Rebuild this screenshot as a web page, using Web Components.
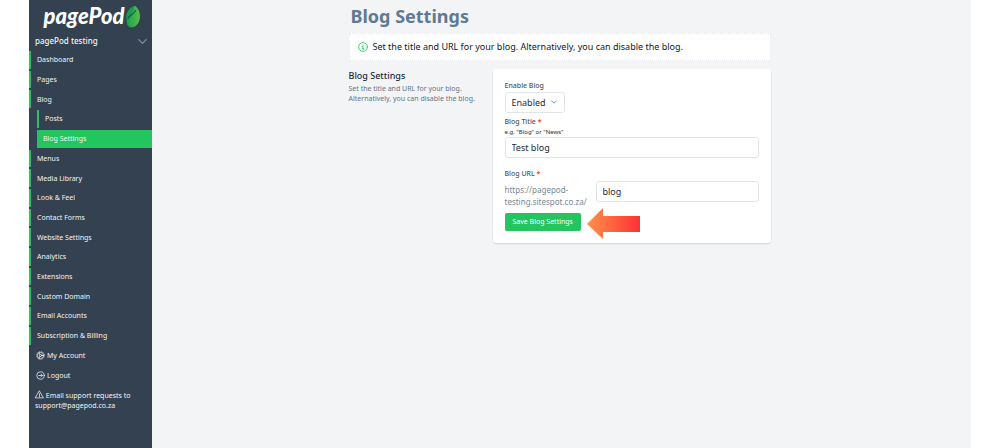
<!DOCTYPE html>
<html lang="en">
<head>
<meta charset="utf-8">
<title>Blog Settings</title>
<style>
body {
    margin: 0;
    background: #fff;
    color: #1f2937;
    font-family: "Noto Sans", sans-serif;
    font-size: 7px;
    line-height: 10px;
}
</style>
</head>
<body>

<app-shell>
    <side-bar slot="sidebar" account="pagePod testing">
        <nav-item>Dashboard</nav-item>
        <nav-item>Pages</nav-item>
        <nav-item>Blog</nav-item>
        <nav-item sub>Posts</nav-item>
        <nav-item sub active>Blog Settings</nav-item>
        <nav-item>Menus</nav-item>
        <nav-item>Media Library</nav-item>
        <nav-item>Look &amp; Feel</nav-item>
        <nav-item>Contact Forms</nav-item>
        <nav-item>Website Settings</nav-item>
        <nav-item>Analytics</nav-item>
        <nav-item>Extensions</nav-item>
        <nav-item>Custom Domain</nav-item>
        <nav-item>Email Accounts</nav-item>
        <nav-item>Subscription &amp; Billing</nav-item>
        <nav-item plain><line-icon name="cog"></line-icon> My Account</nav-item>
        <nav-item plain><line-icon name="logout"></line-icon> Logout</nav-item>
        <span slot="support"><line-icon name="warning"></line-icon> Email support requests to support@pagepod.co.za</span>
    </side-bar>
    <page-title>Blog Settings</page-title>
    <info-banner>Set the title and URL for your blog. Alternatively, you can disable the blog.</info-banner>
    <settings-section heading="Blog Settings">
        <span slot="description">Set the title and URL for your blog. Alternatively, you can disable the blog.</span>
        <blog-form></blog-form>
    </settings-section>
</app-shell>

<script>
class BaseElement extends HTMLElement {

    constructor() {
        super();
        const template = document.createElement('template');
        template.innerHTML = this.constructor.html;
        this.attachShadow({ mode: 'open' });
        this.shadowRoot.append(template.content.cloneNode(true));
    }

}

class LineIcon extends BaseElement {

    static icons = {
        cog: '<circle cx="12" cy="12" r="8.500"/><circle cx="12" cy="12" r="10.500" stroke-dasharray="2.500 3" stroke-linecap="butt"/><circle cx="12" cy="12" r="3"/><path d="M15 12h5M10.500 9.400 8 5M10.500 14.600 8 19"/>',
        logout: '<circle cx="12" cy="12" r="10"/><path d="M7 12h10M13 8l4 4-4 4"/>',
        warning: '<path d="M12 3 22.500 21h-21z"/><path d="M12 10v5M12 17v1"/>',
        info: '<circle cx="12" cy="12" r="10.500"/><path d="M10 11h2v6M10 17h4M12 7v1"/>',
        chevron: '<path stroke-width="3" d="M2 7l10 10L22 7"/>'
    };

    static html = `
        <style>
        :host { display: inline-block; width: 9px; height: 9px; vertical-align: -1px; }
        svg {
            display: block;
            width: 100%;
            height: 100%;
            fill: none;
            stroke: currentColor;
            stroke-width: 2;
            stroke-linejoin: round;
            stroke-linecap: round;
            overflow: visible;
        }
        </style>
        <svg viewBox="0 0 24 24" aria-hidden="true"></svg>
    `;

    connectedCallback() {
        this.shadowRoot.querySelector('svg').innerHTML = LineIcon.icons[this.getAttribute('name')];
    }

}

class PodLogo extends BaseElement {

    static html = `
        <style>
        :host { display: block; }
        a {
            display: flex;
            justify-content: center;
            align-items: center;
            gap: 1px;
            padding-left: 2px;
            color: #fff;
            font: italic 900 22px/32px Lato, "Noto Sans", sans-serif;
            text-decoration: none;
        }
        svg { width: 14px; height: 23px; }
        </style>
        <a href="#"><span>pagePod</span><svg viewBox="0 0 42 69" aria-hidden="true">
            <linearGradient id="leaf"><stop stop-color="#159a52"/><stop offset="1" stop-color="#5cc04a"/></linearGradient>
            <path fill="url(#leaf)" d="M27 2c12 9 17 24 14 40-3 15-12 25-25 25C5 67 1 57 2 44 3 26 14 12 27 2z"/>
            <path fill="#1b9a50" d="M25 2C11 8 1 20 1 35c0 4 0 7 2 9 7-15 21-22 22-42z"/>
            <path fill="none" stroke="#12663a" stroke-width="4" d="M29 15C27 28 10 28 6 41"/>
            <path fill="none" stroke="#4db84b" stroke-width="2" d="M31 17c1 18-16 26-19 43"/>
        </svg></a>
    `;

}

class NavItem extends BaseElement {

    static html = `
        <style>
        :host { display: flex; flex: 1; padding-bottom: 2px; }
        a {
            display: flex;
            flex: 1;
            align-items: center;
            gap: 2px;
            padding: 1px 0 0 6px;
            border-left: 2px solid #22c55e;
            color: #f3f4f6;
            text-decoration: none;
        }
        :host([sub]) { padding-left: 8px; }
        :host([active]) a { padding-left: 4px; background: #22c55e; }
        :host([plain]) a { padding-left: 5px; border-color: transparent; }
        </style>
        <a href="#"><slot></slot></a>
    `;

}

class SideBar extends BaseElement {

    static html = `
        <style>
        :host {
            display: flex;
            flex-direction: column;
            box-sizing: border-box;
            min-height: 100vh;
            padding-bottom: 37px;
            background: #334150;
            color: #f3f4f6;
        }
        button {
            display: flex;
            justify-content: space-between;
            align-items: center;
            padding: 0 5px 0 6px;
            border: 0;
            background: none;
            color: inherit;
            font: 500 8px/18px "Noto Sans", sans-serif;
        }
        button line-icon { color: #8093ab; }
        nav { display: flex; flex: 1; flex-direction: column; padding-top: 1px; }
        p { margin: 0; padding: 4px 16px 0 6px; }
        </style>
        <pod-logo></pod-logo>
        <button type="button"><span></span><line-icon name="chevron"></line-icon></button>
        <nav><slot></slot></nav>
        <p><slot name="support"></slot></p>
    `;

    connectedCallback() {
        this.shadowRoot.querySelector('button span').textContent = this.getAttribute('account');
    }

}

class AppShell extends BaseElement {

    static html = `
        <style>
        :host {
            display: grid;
            grid-template-columns: 123px 1fr;
            min-height: 100vh;
            margin: 0 29px;
            background: #f3f4f6;
        }
        .content { padding-right: 4px; }
        main { max-width: 422px; margin: 0 auto; padding-top: 4px; }
        </style>
        <slot name="sidebar"></slot>
        <div class="content">
            <main><slot></slot></main>
        </div>
    `;

}

class PageTitle extends BaseElement {

    static html = `
        <style>
        :host { display: block; }
        h1 { margin: 0; padding-left: 2px; color: #5f7a93; font-size: 18px; line-height: 24px; font-weight: 700; }
        </style>
        <h1><slot></slot></h1>
    `;

}

class InfoBanner extends BaseElement {

    static html = `
        <style>
        :host {
            display: flex;
            align-items: center;
            gap: 5px;
            margin: 5px 0 8px;
            padding: 5px 8px;
            border: 1px dotted #e5e7eb;
            background: #fff;
            color: #111827;
            font-size: 9px;
            line-height: 16px;
        }
        line-icon { width: 10px; height: 10px; color: #22c55e; }
        </style>
        <line-icon name="info"></line-icon>
        <span><slot></slot></span>
    `;

}

class SettingsSection extends BaseElement {

    static html = `
        <style>
        :host { display: grid; grid-template-columns: 132px 1fr; gap: 12px; }
        h2 { margin: 0; font-size: 9px; line-height: 14px; font-weight: 500; }
        p { margin: 1px 0 0; color: #64748b; }
        </style>
        <div>
            <h2></h2>
            <p><slot name="description"></slot></p>
        </div>
        <slot></slot>
    `;

    connectedCallback() {
        this.shadowRoot.querySelector('h2').textContent = this.getAttribute('heading');
    }

}

class BlogForm extends BaseElement {

    static html = `
        <style>
        :host {
            display: block;
            padding: 12px;
            border-radius: 2px;
            background: #fff;
            box-shadow: 0 1px 2px rgba(0, 0, 0, .12);
        }
        label { display: block; color: #475569; font-weight: 500; }
        label b { color: #ef4444; }
        small { display: block; font-size: 6px; }
        input, select {
            display: block;
            box-sizing: border-box;
            width: 100%;
            height: 21px;
            padding: 0 6px;
            border: 1px solid #e2e4e9;
            border-radius: 3px;
            background: #fff;
            color: #1f2937;
            font: 9px/16px "Noto Sans", sans-serif;
        }
        .select { position: relative; width: 60px; margin: 1px 0 4px; }
        select { appearance: none; }
        .select line-icon { position: absolute; right: 8px; top: 7px; width: 6px; height: 6px; color: #64748b; }
        .title { margin-bottom: 11px; }
        .url { display: grid; grid-template-columns: 82px 1fr; gap: 9px; margin: 2px 0 5px; }
        .url span { padding-top: 3px; color: #7b8794; font-size: 8px; line-height: 12px; }
        .actions { display: flex; gap: 6px; }
        button {
            height: 18px;
            padding: 0 8px;
            border: 0;
            border-radius: 2px;
            background: #22c55e;
            color: #fff;
            font: 7px/18px "Noto Sans", sans-serif;
        }
        .actions svg { width: 53px; height: 31px; margin: -5px 0 -8px; }
        </style>
        <form>
            <label for="enabled">Enable Blog</label>
            <div class="select">
                <select id="enabled"><option>Enabled</option><option>Disabled</option></select>
                <line-icon name="chevron"></line-icon>
            </div>
            <label for="title">Blog Title <b>*</b></label>
            <small>e.g. "Blog" or "News"</small>
            <div class="title"><input id="title" value="Test blog"></div>
            <label for="url">Blog URL <b>*</b></label>
            <div class="url">
                <span>https://pagepod-testing.sitespot.co.za/</span>
                <input id="url" value="blog">
            </div>
            <div class="actions">
                <button type="button">Save Blog Settings</button>
                <svg viewBox="0 0 53 31" aria-hidden="true">
                    <linearGradient id="fade"><stop stop-color="#ff914d"/><stop offset="1" stop-color="#ff3131"/></linearGradient>
                    <path fill="url(#fade)" d="M0 16 16 0v8h37v16H16v7z"/>
                </svg>
            </div>
        </form>
    `;

}

customElements.define('line-icon', LineIcon);
customElements.define('pod-logo', PodLogo);
customElements.define('nav-item', NavItem);
customElements.define('side-bar', SideBar);
customElements.define('page-title', PageTitle);
customElements.define('info-banner', InfoBanner);
customElements.define('settings-section', SettingsSection);
customElements.define('blog-form', BlogForm);
customElements.define('app-shell', AppShell);
</script>
</body>
</html>
